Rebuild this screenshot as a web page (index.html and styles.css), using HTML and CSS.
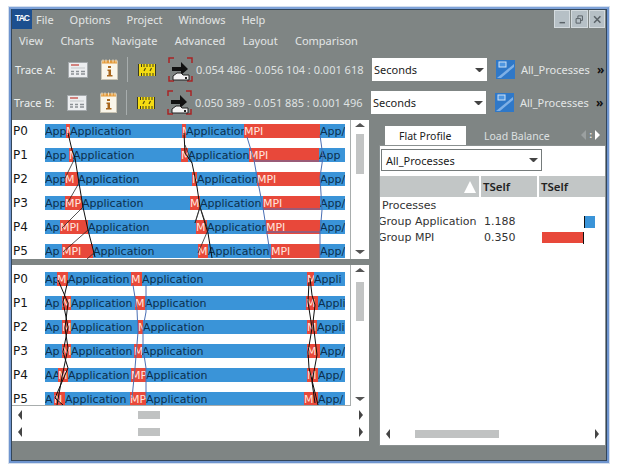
FILE: index.html
```html
<!DOCTYPE html>
<html lang="en">
<head>
<meta charset="utf-8">
<title>Trace Analyzer</title>
<link rel="stylesheet" href="styles.css">
</head>
<body>
<div class="window">
  <div class="titlerow">
    <div class="logo">TAC</div>
    <nav class="menu menu-main"><span>File</span><span>Options</span><span>Project</span><span>Windows</span><span>Help</span></nav>
    <div class="winbtns">
      <button class="winbtn"><svg width="16" height="17" viewBox="0 0 16 17"><path d="M5 12h6" stroke="#5a6268" stroke-width="1.6"/></svg></button>
      <button class="winbtn"><svg width="16" height="17" viewBox="0 0 16 17"><path d="M6.500 7V4.500h5v5H9M4.500 7.500h5v5h-5z" fill="none" stroke="#5a6268" stroke-width="1.1"/></svg></button>
      <button class="winbtn"><svg width="16" height="17" viewBox="0 0 16 17"><path d="M4.500 5l7 7M11.500 5l-7 7" stroke="#5a6268" stroke-width="1.7"/></svg></button>
    </div>
  </div>
  <nav class="menu menu-sub"><span>View</span><span>Charts</span><span>Navigate</span><span>Advanced</span><span>Layout</span><span>Comparison</span></nav>

  <div class="trace trace-a">
    <span class="trace-label">Trace A:</span>
    <svg class="ic-chart" width="20" height="16" viewBox="0 0 20 16"><rect x=".5" y=".5" width="19" height="15" fill="#eceef0" stroke="#a4a9ac"/><path d="M3 3h8" stroke="#c8544c" stroke-width="1.4"/><path d="M3 6h14" stroke="#c4c8ca"/><path d="M3 9.500h3M8 9.500h3M13 9.500h4M3 12h3M8 12h3M13 12h4" stroke="#8a9094" stroke-width="1.300"/></svg>
    <svg class="ic-info" width="17" height="21" viewBox="0 0 17 21"><rect x=".5" y="2" width="16" height="18.500" fill="#faf6ea" stroke="#c9c4b4"/><path d="M1 1.500h15v3H1z" fill="#e49a3a"/><path d="M2 .5v3M5 .5v3M8.500 .5v3M12 .5v3M15 .5v3" stroke="#f6e4c4"/><path d="M7 7h3v2H7zM6.500 10.500H10V16h1.500v1.500h-5.500V16H7.500v-4h-1z" fill="#a8661c"/></svg>
    <i class="sep"></i>
    <svg class="ic-ruler" width="18" height="12" viewBox="0 0 18 12"><rect width="18" height="12" fill="#f5dc12"/><path d="M.5 0v12M3.500 0v3M6 0v3M9 0v3M12 0v3M15 0v3M17.500 0v12M3.500 12V9M6 12V9M9 12V9M12 12V9M15 12V9" stroke="#3a3a20"/><path d="M6 7l1.500-3M12 7l1.500-3" stroke="#554f10" stroke-width="1.200"/></svg>
    <svg class="ic-jump" width="25" height="25" viewBox="0 0 25 25"><path d="M1 6V1h5M19 1h5v5M24 19v5h-5M6 24H1v-5" fill="none" stroke="#a92424" stroke-width="1.500"/><path d="M4 10h9V5l7 7-7 6v-4H4z" fill="#111"/><path d="M5 23v-4l4-3h4l2 2h6v5z" fill="#f4f4f4" stroke="#222"/><path d="M17 20h2v2h-2z" fill="#222"/></svg>
    <span class="times">0.054 486 - 0.056 104 : 0.001 618</span>
    <div class="combo combo-unit"><span>Seconds</span><i class="caret"></i></div>
    <svg class="ic-group" width="19" height="19" viewBox="0 0 19 19"><rect width="19" height="19" fill="#2f78c8"/><path d="M1 18L18 4v3L5 18z" fill="#7fb0e6"/><rect x="3" y="2" width="7" height="5" fill="#4f96e0" stroke="#cfe2f6"/></svg>
    <span class="procs">All_Processes</span>
    <span class="more">&raquo;</span>
  </div>
  <div class="trace trace-b">
    <span class="trace-label">Trace B:</span>
    <svg class="ic-chart" width="20" height="16" viewBox="0 0 20 16"><rect x=".5" y=".5" width="19" height="15" fill="#eceef0" stroke="#a4a9ac"/><path d="M3 3h8" stroke="#c8544c" stroke-width="1.4"/><path d="M3 6h14" stroke="#c4c8ca"/><path d="M3 9.500h3M8 9.500h3M13 9.500h4M3 12h3M8 12h3M13 12h4" stroke="#8a9094" stroke-width="1.300"/></svg>
    <svg class="ic-info" width="17" height="21" viewBox="0 0 17 21"><rect x=".5" y="2" width="16" height="18.500" fill="#faf6ea" stroke="#c9c4b4"/><path d="M1 1.500h15v3H1z" fill="#e49a3a"/><path d="M2 .5v3M5 .5v3M8.500 .5v3M12 .5v3M15 .5v3" stroke="#f6e4c4"/><path d="M7 7h3v2H7zM6.500 10.500H10V16h1.500v1.500h-5.500V16H7.500v-4h-1z" fill="#a8661c"/></svg>
    <i class="sep"></i>
    <svg class="ic-ruler" width="18" height="12" viewBox="0 0 18 12"><rect width="18" height="12" fill="#f5dc12"/><path d="M.5 0v12M3.500 0v3M6 0v3M9 0v3M12 0v3M15 0v3M17.500 0v12M3.500 12V9M6 12V9M9 12V9M12 12V9M15 12V9" stroke="#3a3a20"/><path d="M6 7l1.500-3M12 7l1.500-3" stroke="#554f10" stroke-width="1.200"/></svg>
    <svg class="ic-jump" width="25" height="25" viewBox="0 0 25 25"><path d="M1 6V1h5M19 1h5v5M24 19v5h-5M6 24H1v-5" fill="none" stroke="#a92424" stroke-width="1.500"/><path d="M4 10h9V5l7 7-7 6v-4H4z" fill="#111"/><path d="M5 23v-4l4-3h4l2 2h6v5z" fill="#f4f4f4" stroke="#222"/><path d="M17 20h2v2h-2z" fill="#222"/></svg>
    <span class="times">0.050 389 - 0.051 885 : 0.001 496</span>
    <div class="combo combo-unit"><span>Seconds</span><i class="caret"></i></div>
    <svg class="ic-group" width="19" height="19" viewBox="0 0 19 19"><rect width="19" height="19" fill="#2f78c8"/><path d="M1 18L18 4v3L5 18z" fill="#7fb0e6"/><rect x="3" y="2" width="7" height="5" fill="#4f96e0" stroke="#cfe2f6"/></svg>
    <span class="procs">All_Processes</span>
    <span class="more">&raquo;</span>
  </div>

  <div class="workspace">
    <div class="left">
      <section class="pane pane-top">
        <div class="chart">
          <div class="row"><span class="proc">P0</span><div class="bar"><span class="a" style="width:21px">App</span><span class="m" style="width:4px">M</span><span class="a" style="width:112px">Application</span><span class="m" style="width:4px">M</span><span class="a" style="width:58px">Application</span><span class="m" style="width:76px">MPI</span><span class="a" style="width:25px">App/</span></div></div>
          <div class="row"><span class="proc">P1</span><div class="bar"><span class="a" style="width:24px">App</span><span class="m" style="width:4px">M</span><span class="a" style="width:108px">Application</span><span class="m" style="width:7px">M</span><span class="a" style="width:61px">Application</span><span class="m" style="width:70px">MPI</span><span class="a" style="width:22px">App</span></div></div>
          <div class="row"><span class="proc">P2</span><div class="bar"><span class="a" style="width:20px">App</span><span class="m" style="width:13px">M</span><span class="a" style="width:114px">Application</span><span class="m" style="width:5px">M</span><span class="a" style="width:60px">Application</span><span class="m" style="width:63px">MPI</span><span class="a" style="width:25px">App/</span></div></div>
          <div class="row"><span class="proc">P3</span><div class="bar"><span class="a" style="width:20px">App</span><span class="m" style="width:17px">MP</span><span class="a" style="width:108px">Application</span><span class="m" style="width:10px">M</span><span class="a" style="width:63px">Application</span><span class="m" style="width:57px">MPI</span><span class="a" style="width:25px">App/</span></div></div>
          <div class="row"><span class="proc">P4</span><div class="bar"><span class="a" style="width:15px">Ap</span><span class="m" style="width:28px">MPI</span><span class="a" style="width:108px">Application</span><span class="m" style="width:11px">M</span><span class="a" style="width:59px">Application</span><span class="m" style="width:54px">MPI</span><span class="a" style="width:25px">App/</span></div></div>
          <div class="row"><span class="proc">P5</span><div class="bar"><span class="a" style="width:17px">Ap</span><span class="m" style="width:31px">MPI</span><span class="a" style="width:105px">Application</span><span class="m" style="width:10px">M</span><span class="a" style="width:63px">Application</span><span class="m" style="width:49px">MPI</span><span class="a" style="width:25px">App/</span></div></div>
          <svg class="msgs" width="339" height="139" viewBox="12 120 339 139">
            <g class="black">
              <path d="M68 133L72 150L75 158L79 183L83 207L88 230L95 257"/>
              <path class="thin" d="M75 158L65 178M79 183L68 202"/>
              <path class="thin" d="M83 207L62 228M88 230L63 252M95 252L87 259"/>
              <path d="M184 133L185 153L192 163L197 187L200 207L208 233L212 258"/>
              <path class="thin" d="M185 145L192 163M200 207L195 223L200 207L208 230L198 253"/>
            </g>
            <g class="blue">
              <path d="M247 137L254 160L257 177L263 208L266 227L270 253L271 259"/>
              <path d="M320 135L323 157L320 177L322 210L320 233L320 258"/>
              <path d="M254 161H323M263 209H320M266 232H320"/>
            </g>
          </svg>
        </div>
        <div class="vscroll"><i class="up"></i><i class="thumb thumb-top"></i><i class="down"></i></div>
      </section>
      <section class="pane pane-bottom">
        <div class="upper">
        <div class="chart chart-low">
          <div class="row"><span class="proc">P0</span><div class="bar"><span class="a" style="width:12px">Ap</span><span class="m" style="width:11px">M</span><span class="a" style="width:63px">Application</span><span class="m" style="width:11px">M</span><span class="a" style="width:165px">Application</span><span class="m" style="width:7px">M</span><span class="a" style="width:31px">Appli</span></div></div>
          <div class="row"><span class="proc">P1</span><div class="bar"><span class="a" style="width:17px">Ap</span><span class="m" style="width:9px">M</span><span class="a" style="width:64px">Application</span><span class="m" style="width:10px">M</span><span class="a" style="width:161px">Application</span><span class="m" style="width:12px">M</span><span class="a" style="width:27px">Appli</span></div></div>
          <div class="row"><span class="proc">P2</span><div class="bar"><span class="a" style="width:17px">Ap</span><span class="m" style="width:9px">M</span><span class="a" style="width:67px">Application</span><span class="m" style="width:5px">M</span><span class="a" style="width:164px">Application</span><span class="m" style="width:10px">M</span><span class="a" style="width:28px">Appli</span></div></div>
          <div class="row"><span class="proc">P3</span><div class="bar"><span class="a" style="width:17px">Ap</span><span class="m" style="width:9px">M</span><span class="a" style="width:63px">Application</span><span class="m" style="width:8px">M</span><span class="a" style="width:165px">Application</span><span class="m" style="width:13px">M</span><span class="a" style="width:25px">App/</span></div></div>
          <div class="row"><span class="proc">P4</span><div class="bar"><span class="a" style="width:13px">AA</span><span class="m" style="width:10px">M</span><span class="a" style="width:63px">Application</span><span class="m" style="width:15px">MP</span><span class="a" style="width:161px">Application</span><span class="m" style="width:11px">M</span><span class="a" style="width:27px">App/</span></div></div>
          <div class="row"><span class="proc">P5</span><div class="bar"><span class="a" style="width:9px">A</span><span class="m" style="width:11px">N</span><span class="a" style="width:65px">Application</span><span class="m" style="width:16px">MP</span><span class="a" style="width:158px">Application</span><span class="m" style="width:14px">M</span><span class="a" style="width:27px">App/</span></div></div>
          <svg class="msgs" width="339" height="141" viewBox="12 265 339 141">
            <g class="black">
              <path d="M58 280L68 303L65 328L68 348L62 377L57 405"/>
              <path d="M68 280L63 302L68 327L63 352L68 368L55 398L63 405"/>
              <path d="M310 278L312 295L315 305L313 322L317 355L312 382L315 403"/>
              <path d="M309 282L308 302L312 328L308 352L309 368L318 405"/>
            </g>
            <g class="blue">
              <path d="M133 285L137 310L138 332L135 368L132 398"/>
              <path d="M146 285L146 312L143 328L143 348L146 368L146 398"/>
            </g>
          </svg>
        </div>
        <div class="vscroll"><i class="up"></i><i class="thumb thumb-low"></i><i class="down"></i></div>
        </div>
        <div class="hscroll"><i class="left-arrow"></i><i class="hthumb"></i><i class="right-arrow"></i></div>
        <div class="hscroll"><i class="left-arrow"></i><i class="hthumb"></i><i class="right-arrow"></i></div>
      </section>
    </div>

    <aside class="right">
      <div class="tabs">
        <span class="tab tab-on">Flat Profile</span>
        <span class="tab">Load Balance</span>
        <span class="tabnav"><i class="nav-l"></i><b>:</b><i class="nav-r"></i></span>
      </div>
      <div class="panel">
        <div class="combo combo-proc"><span>All_Processes</span><i class="caret"></i></div>
        <div class="thead">
          <div class="th th-sort"><i class="sort"></i></div>
          <div class="th">TSelf</div>
          <div class="th">TSelf</div>
        </div>
        <div class="tbody">
          <div class="tr"><span class="name name-root">Processes</span></div>
          <div class="tr"><span class="name">Group Application</span><span class="val">1.188</span><span class="cellbar"><i class="axis"></i><i class="bar-app"></i></span></div>
          <div class="tr"><span class="name">Group MPI</span><span class="val">0.350</span><span class="cellbar"><i class="bar-mpi"></i><i class="axis"></i></span></div>
        </div>
        <div class="hscroll hscroll-right"><i class="left-arrow"></i><i class="hthumb hthumb-right"></i><i class="right-arrow"></i></div>
      </div>
    </aside>
  </div>
</div>
</body>
</html>
```

FILE: styles.css
```css
* { box-sizing: border-box; }
html, body { margin: 0; padding: 0; background: #fff; }
body { width: 619px; height: 471px; overflow: hidden; }

.window {
  position: relative;
  margin: 7px 0 0 9px;
  width: 600px;
  height: 456px;
  background: #7f8584;
  border: 2px solid #6f95cf;
  border-top-color: #7ea2d8;
  outline: 1px solid #d4dfee;
  display: flex;
  flex-direction: column;
  box-shadow: inset 0 0 0 1px #33465a;
  font-family: "Noto Sans", "Liberation Sans", sans-serif;
  font-size: 11px;
  color: #e3e6e6;
}

.titlerow { display: flex; height: 21px; padding-left: 1px; flex: none; }
.logo {
  width: 20px; height: 20px;
  background: #1c4f8f;
  color: #fff;
  font: bold 8.500px/18px "Liberation Sans", sans-serif;
  letter-spacing: -1px;
  text-align: center;
}
.menu { display: flex; gap: 16px; line-height: 21px; }
.menu-main { margin-left: 4px; }
.menu-sub { margin-left: 8px; height: 21px; flex: none; gap: 17.300px; }

.winbtns { margin-left: auto; display: flex; gap: 1px; padding: 1px 2px 0 0; }
.winbtn {
  width: 16.500px; height: 18px; padding: 0;
  background: #b6c0c6;
  border: 1px solid #d4dbdf;
  display: flex; align-items: center; justify-content: center;
}

.trace { display: flex; align-items: center; height: 33px; flex: none; }
.trace-a { padding-left: 4px; margin-top: 2px; }
.trace-b { padding-left: 3px; }
.trace-label { width: 53px; flex: none; color: #ecefef; font-size: 11px; }
.ic-chart { flex: none; }
.ic-info { margin-left: 13px; flex: none; }
.sep { width: 1px; height: 25px; background: #a7adad; margin-left: 9px; flex: none; }
.ic-ruler { margin-left: 10px; flex: none; }
.ic-jump { margin-left: 12px; flex: none; }
.times { margin-left: 3px; width: 176px; white-space: nowrap; flex: none; color: #dfe2e2; font-size: 11px; }

.combo {
  position: relative;
  display: flex;
  align-items: center;
  background: #fff;
  color: #1b1b1b;
  font-size: 11px;
}
.combo-unit { width: 115px; height: 23px; padding-left: 2px; flex: none; }
.caret {
  position: absolute; right: 3px; top: 50%;
  margin-top: -2px;
  width: 9px; height: 0;
  border-top: 4.500px solid #444;
  border-left: 4.500px solid transparent;
  border-right: 4.500px solid transparent;
}
.ic-group { margin-left: 9px; flex: none; }
.procs { margin-left: 6px; width: 76px; white-space: nowrap; flex: none; color: #e3e6e6; font-size: 11px; }
.more { color: #111; font-weight: 700; font-size: 12px; line-height: 12px; }

.workspace { display: flex; flex: 1; min-height: 0; margin-top: 1px; padding-left: 1px; }
.left { width: 357px; flex: none; display: flex; flex-direction: column; height: 321px; }

.pane { background: #fff; display: flex; }
.pane-top { height: 139px; flex: none; }
.pane-bottom { height: 176px; margin-top: 6px; flex: none; flex-direction: column; }
.upper { display: flex; height: 141px; flex: none; }

.chart {
  position: relative;
  width: 339px;
  height: 139px;
  flex: none;
  border-right: 1px solid #a8adad;
  padding-top: 4px;
  overflow: hidden;
}
.chart-low { height: 141px; padding-top: 7px; border-bottom: 1px solid #a8adad; }
.row { display: flex; height: 24px; }
.proc {
  width: 33px; padding-left: 1px;
  flex: none;
  font: 12px/15px "DejaVu Sans", sans-serif;
  color: #161616;
}
.bar {
  display: flex;
  width: 300px;
  height: 14px;
  font: 11px/15px "DejaVu Sans", sans-serif;
  background: #3a94d8;
}
.bar span { display: block; overflow: hidden; white-space: nowrap; flex: none; }
.a { background: #3a94d8; color: #0c2f4d; }
.m { background: #e8483a; color: #ffe4de; }

.msgs { position: absolute; left: 0; top: 0; pointer-events: none; }
.msgs path { fill: none; }
.black path { stroke: #0e0e0e; stroke-width: 1; }
.black .thin { stroke: #2a2a2a; stroke-width: .8; }
.blue path { stroke: #4a6fb5; stroke-width: 1; }

.vscroll { position: relative; width: 18px; flex: none; }
.up, .down {
  position: absolute; left: 4px;
  border-left: 5px solid transparent;
  border-right: 5px solid transparent;
}
.up { top: 3px; border-bottom: 4px solid #555; }
.down { bottom: 5px; border-top: 4px solid #555; }
.thumb { position: absolute; left: 5px; width: 8px; background: #c2c4c4; }
.thumb-top { top: 14px; height: 40px; }
.thumb-low { top: 17px; height: 39px; }

.hscroll { position: relative; height: 17px; flex: none; }
.left-arrow, .right-arrow {
  position: absolute; top: 4px;
  border-top: 5px solid transparent;
  border-bottom: 5px solid transparent;
}
.left-arrow { left: 6px; border-right: 4px solid #444; }
.right-arrow { right: 6px; border-left: 4px solid #444; }
.hthumb { position: absolute; left: 126px; top: 5px; width: 22px; height: 8px; background: #c0c2c2; }

.right { width: 227px; margin-left: 10px; flex: none; display: flex; flex-direction: column; height: 320px; margin-top: 6px; }
.tabs { position: relative; display: flex; height: 19px; flex: none; padding-left: 6px; }
.tab { width: 99px; line-height: 20px; font-size: 10.500px; color: #dde0e0; white-space: nowrap; }
.tab-on { width: 81px; padding-left: 14px; background: #fff; color: #222; margin-right: 18px; }
.tabnav { position: absolute; right: 6px; top: 2px; display: flex; align-items: center; gap: 3px; color: #eee; height: 13px; font-size: 9px; }
.nav-l { border-top: 5px solid transparent; border-bottom: 5px solid transparent; border-right: 5px solid #9ba0a0; }
.nav-r { border-top: 5px solid transparent; border-bottom: 5px solid transparent; border-left: 5px solid #fff; }

.panel {
  flex: 1;
  background: #fff;
  border: 1px solid #8a9090;
  display: flex;
  flex-direction: column;
  color: #333;
  overflow: hidden;
}
.combo-proc {
  width: 161px; height: 22px;
  margin: 3px 0 0 1px;
  padding-left: 4px;
  border: 1px solid #757b7b;
  flex: none;
}
.thead { display: grid; grid-template-columns: 101px 58px 1fr; height: 21px; margin-top: 5px; flex: none; background: #c2c6c6; }
.th { display: flex; align-items: center; padding-left: 2px; font-weight: 600; font-size: 11.500px; color: #222; border-right: 2px solid #fff; position: relative; }
.th:last-child { border-right: 0; }
.sort {
  position: absolute; right: 3px; top: 5px;
  border-left: 6px solid transparent;
  border-right: 6px solid transparent;
  border-bottom: 12px solid #fff;
}
.tbody { flex: 1; padding-top: 1px; font: 11px/16px "DejaVu Sans", sans-serif; }
.tr { display: grid; grid-template-columns: 103px 57px 1fr; height: 16px; align-items: center; white-space: nowrap; }
.name { margin-left: -2px; }
.name-root { margin-left: 2px; }
.val { padding-left: 1px; }
.cellbar { display: flex; height: 12px; }
.axis { width: 1px; height: 12px; background: #111; flex: none; }
.bar-app { width: 10px; background: #3a94d8; }
.bar-mpi { width: 41px; margin-left: 2px; height: 11px; background: #e8483a; }
.tr:nth-child(2) .cellbar { padding-left: 44px; }

.hscroll-right { height: 18px; margin-bottom: 2px; }
.hthumb-right { left: 35px; width: 84px; }
```
